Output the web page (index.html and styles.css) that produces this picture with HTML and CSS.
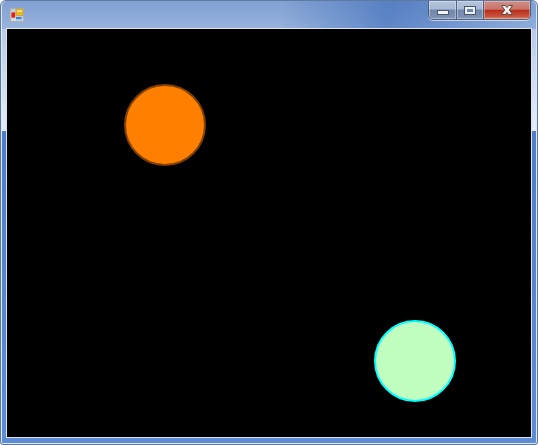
FILE: index.html
```html
<!DOCTYPE html>
<html lang="en">
<head>
<meta charset="utf-8">
<title>Form</title>
<link rel="stylesheet" href="styles.css">
</head>
<body>
<div class="window">
  <header class="titlebar">
    <svg class="app-icon" width="14" height="14" viewBox="0 0 14 14">
      <rect x="0.5" y="0.5" width="13" height="13" fill="#c3cbd6" stroke="#aab0b6"/>
      <rect x="1" y="10.500" width="12" height="2.500" fill="#d5dbe3"/>
      <rect x="1" y="4" width="4.500" height="6" fill="#d8231c" stroke="#f1d8c8" stroke-width="0.7"/>
      <rect x="6" y="1" width="7" height="6.500" fill="#f2b91d" stroke="#b89a50" stroke-width="0.7"/>
      <rect x="7" y="2" width="5" height="2" fill="#fbe07a"/>
      <rect x="6" y="9" width="5.500" height="3" fill="#3f7fe0"/>
      <rect x="6" y="11" width="5.500" height="1.500" fill="#a6c4ec"/>
    </svg>
    <div class="controls">
      <div class="btn btn-min"><span class="glyph-min"></span></div>
      <div class="btn btn-max"><span class="glyph-max"></span></div>
      <div class="btn btn-close">
        <svg width="16" height="12" viewBox="0 0 16 12"><path d="M2.500 1.500H6.500L8 3.500L9.500 1.500H13.500L10.300 6L13.500 10.500H9.500L8 8.500L6.500 10.500H2.500L5.700 6Z" fill="#f2f0ee" stroke="#5e4a48" stroke-width="1"/></svg>
      </div>
    </div>
  </header>
  <main class="client">
    <div class="ball ball-orange"></div>
    <div class="ball ball-green"></div>
  </main>
</div>
</body>
</html>
```
FILE: styles.css
```css
html, body {
  margin: 0;
  height: 100%;
  background: #fff;
  overflow: hidden;
}
.window {
  box-sizing: border-box;
  width: 538px;
  height: 445px;
  display: flex;
  flex-direction: column;
  padding: 0 6px 7px;
  border: 1px solid #5f7a9e;
  border-radius: 6px 6px 3px 3px;
  box-shadow: inset 0 0 0 1px #dfe9f6;
  background:
    linear-gradient(to bottom, rgba(255,255,255,0) 0, rgba(255,255,255,0) 130px, #4f7ec9 130px, #5f8dd3 100%),
    linear-gradient(to bottom, #a9bfe2 0, #c6d6ee 60px, #e4ecf7 128px),
    #5f8dd3;
}
.titlebar {
  height: 28px;
  flex: none;
  margin: 0 -5px;
  padding-left: 8px;
  display: flex;
  align-items: flex-start;
  justify-content: space-between;
  border-radius: 5px 5px 0 0;
  background:
    linear-gradient(100deg, rgba(60,105,180,0) 52%, rgba(50,100,180,.55) 72%, rgba(70,115,190,.5) 82%, rgba(120,160,215,.25) 100%),
    linear-gradient(to bottom, #82a1d3 0, #8eabd8 60%, #9ab5de 100%);
}
.app-icon {
  margin-top: 7px;
}
.controls {
  display: flex;
  height: 19px;
  margin-right: 5px;
  margin-top: 0;
  box-sizing: border-box;
  border: 1px solid #4f617c;
  border-top: 0;
  border-radius: 0 0 5px 5px;
  overflow: hidden;
  box-shadow: 0 1px 0 rgba(255,255,255,.6);
}
.btn {
  display: flex;
  align-items: center;
  justify-content: center;
  box-sizing: border-box;
}
.btn-min, .btn-max {
  width: 28px;
  border-right: 1px solid #4f617c;
  background: linear-gradient(to bottom, #b4c3da 0, #a6b9d4 45%, #7288aa 50%, #7e95b8 100%);
  box-shadow: inset 0 0 0 1px rgba(255,255,255,.35);
}
.btn-max { width: 27px; }
.btn-close {
  width: 46px;
  background: linear-gradient(to bottom, #cf8f85 0, #c9746a 45%, #b8301c 52%, #c9523c 85%, #d88a70 100%);
  box-shadow: inset 0 0 0 1px rgba(255,255,255,.3);
}
.glyph-min {
  width: 10px;
  height: 3px;
  margin-top: 5px;
  background: #f4f6f9;
  border: 1px solid #47566e;
}
.glyph-max {
  width: 6px;
  height: 3px;
  background: #6f86ad;
  border: 2px solid #eef1f6;
  outline: 1px solid #47566e;
}
.client {
  position: relative;
  flex: 1;
  background: #000;
  box-shadow: 0 0 0 1px #dbe5f2;
}
.ball {
  position: absolute;
  box-sizing: border-box;
  width: 82px;
  height: 82px;
  border-radius: 50%;
}
.ball-orange {
  left: 116.5px;
  top: 54.5px;
  background: #ff8000;
  border: 2.5px solid #804000;
}
.ball-green {
  left: 366.5px;
  top: 290.5px;
  background: #c0ffc0;
  border: 2.5px solid #00ffff;
}
```
